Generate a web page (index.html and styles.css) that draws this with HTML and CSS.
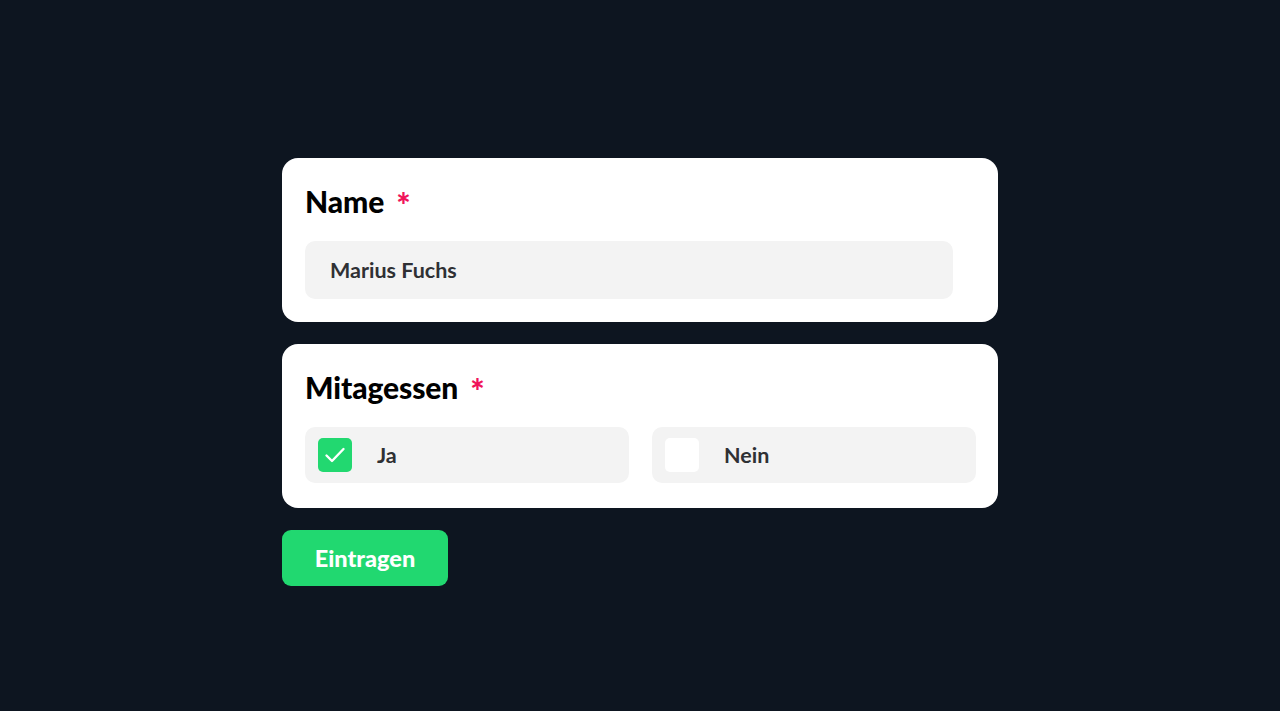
FILE: index.html
```html
<!DOCTYPE html>
<html lang="de">
<head>
<meta charset="utf-8">
<link rel="stylesheet" href="styles.css">
</head>
<body>
<main class="page">
  <form class="form">
    <section class="card">
      <h2 class="label">Name <span class="req">*</span></h2>
      <div class="input">Marius Fuchs</div>
    </section>
    <section class="card">
      <h2 class="label">Mitagessen <span class="req">*</span></h2>
      <div class="options">
        <div class="option">
          <span class="box checked">
            <svg viewBox="0 0 34 34" width="34" height="34"><path d="M8.5 17.5 L14 23 L25.5 11" fill="none" stroke="#fff" stroke-width="2.4" stroke-linecap="round" stroke-linejoin="round"/></svg>
          </span>
          <span class="opt-text">Ja</span>
        </div>
        <div class="option">
          <span class="box"></span>
          <span class="opt-text">Nein</span>
        </div>
      </div>
    </section>
    <button type="button" class="submit">Eintragen</button>
  </form>
</main>
</body>
</html>
```

FILE: styles.css
```css
html, body {
  margin: 0;
  padding: 0;
  background: #0d1520;
  font-family: "Lato", "Noto Sans", sans-serif;
}
.page {
  width: 1280px;
  height: 711px;
  display: flex;
  justify-content: center;
  padding-top: 158px;
  box-sizing: border-box;
}
.form {
  width: 716px;
  display: flex;
  flex-direction: column;
  align-items: flex-start;
  gap: 22px;
}
.card {
  width: 100%;
  box-sizing: border-box;
  background: #fff;
  border-radius: 16px;
  padding: 26px 22px 22px 23px;
  height: 164px;
}
.label {
  margin: 0;
  font-size: 30px;
  font-weight: 900;
  color: #000;
  line-height: 34px;
  letter-spacing: -0.1px;
}
.req {
  color: #f0145a;
  margin-left: 5px;
  font-size: 34px;
  line-height: 0;
  vertical-align: -5px;
}
.input {
  margin-top: 23px;
  width: 648px;
  height: 58px;
  box-sizing: border-box;
  background: #f3f3f3;
  border-radius: 10px;
  padding-left: 25px;
  display: flex;
  align-items: center;
  font-size: 21.5px;
  font-weight: 700;
  color: #2f3034;
}
.options {
  margin-top: 23px;
  display: grid;
  grid-template-columns: 1fr 1fr;
  gap: 23px;
}
.option {
  height: 56px;
  background: #f3f3f3;
  border-radius: 10px;
  display: flex;
  align-items: center;
  padding-left: 13px;
  gap: 25px;
  font-size: 21.5px;
  font-weight: 700;
  color: #2f3034;
}
.box {
  width: 34px;
  height: 34px;
  border-radius: 5px;
  background: #fff;
  display: flex;
}
.box.checked {
  background: #22d870;
}
.submit {
  width: 166px;
  height: 56px;
  border: 0;
  border-radius: 9px;
  background: #21d870;
  color: #fff;
  font-family: inherit;
  font-size: 23.5px;
  font-weight: 900;
  cursor: pointer;
}
```
